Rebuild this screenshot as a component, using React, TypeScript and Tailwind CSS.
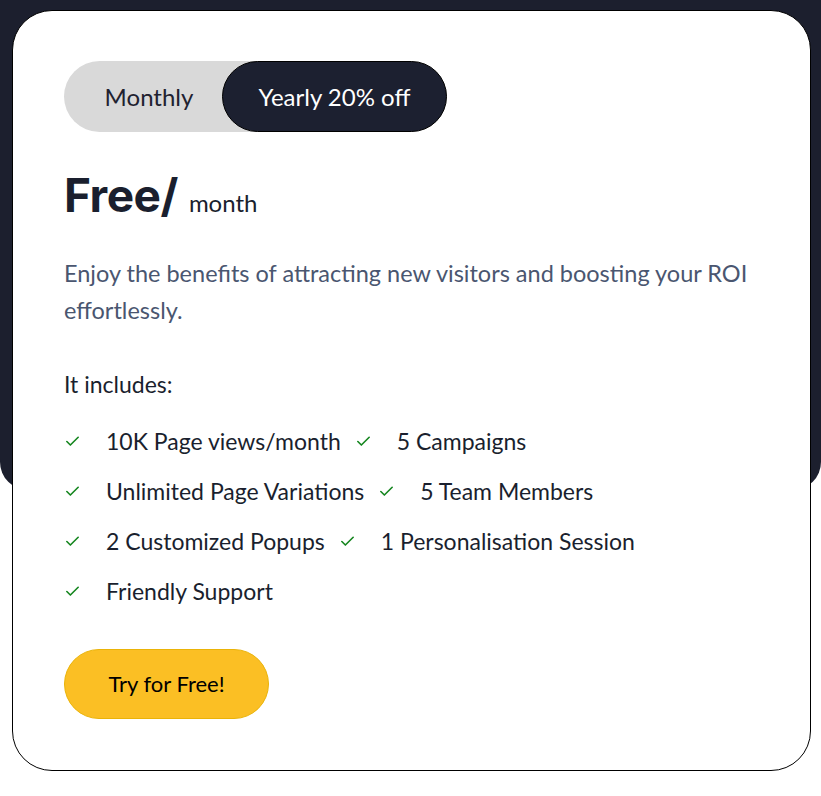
import { Check } from 'lucide-react'

const features = [
  '10K Page views/month',
  '5 Campaigns',
  'Unlimited Page Variations',
  '5 Team Members',
  '2 Customized Popups',
  '1 Personalisation Session',
  'Friendly Support',
]

function BillingToggle() {
  return (
    <div className="flex h-[71px] w-[383px] rounded-full bg-[#d9d9d9] text-[24px]">
      <button className="w-[170px] text-[#1f2230]">Monthly</button>
      <button className="-ml-[12px] flex-1 rounded-full border border-black bg-[#1c2030] text-white">
        Yearly 20% off
      </button>
    </div>
  )
}

function FeatureList() {
  return (
    <ul className="flex w-[700px] flex-wrap gap-x-[14px] text-[23px] text-[#1a1f2e]">
      {features.map((f) => (
        <li key={f} className="flex h-[50px] items-center gap-[25px]">
          <Check className="h-[17px] w-[17px] text-[#15861f]" strokeWidth={2.3} />
          <span>{f}</span>
        </li>
      ))}
    </ul>
  )
}

export default function App() {
  return (
    <div className="relative min-h-screen bg-white" style={{ fontFamily: 'Lato, "Noto Sans", sans-serif' }}>
      <div className="absolute inset-x-0 top-0 h-[490px] rounded-b-[28px] bg-[#1c1f2e]" />
      <div className="relative ml-[12px] mr-[10px] pt-[10px]">
        <div className="rounded-[40px] border border-black bg-white px-[51px] pt-[50px] pb-[51px]">
          <BillingToggle />
          <div className="mt-[29px] flex items-baseline gap-[11px]">
            <span className="text-[46px] font-bold tracking-[-0.5px] text-[#1a1f2e]" style={{ fontFamily: 'Inter, sans-serif' }}>
              Free/
            </span>
            <span className="text-[24px] text-[#1a1f2e]">month</span>
          </div>
          <p className="mt-[25px] text-[23.5px] leading-[37px] text-[#4a5670]">
            Enjoy the benefits of attracting new visitors and boosting your ROI effortlessly.
          </p>
          <p className="mt-[38px] text-[23px] text-[#1a1f2e]">It includes:</p>
          <div className="mt-[15px]">
            <FeatureList />
          </div>
          <button className="mt-[32px] h-[70px] w-[205px] rounded-full border border-[#eab308] bg-[#fbbf24] text-[22px] text-black">
            Try for Free!
          </button>
        </div>
      </div>
    </div>
  )
}
